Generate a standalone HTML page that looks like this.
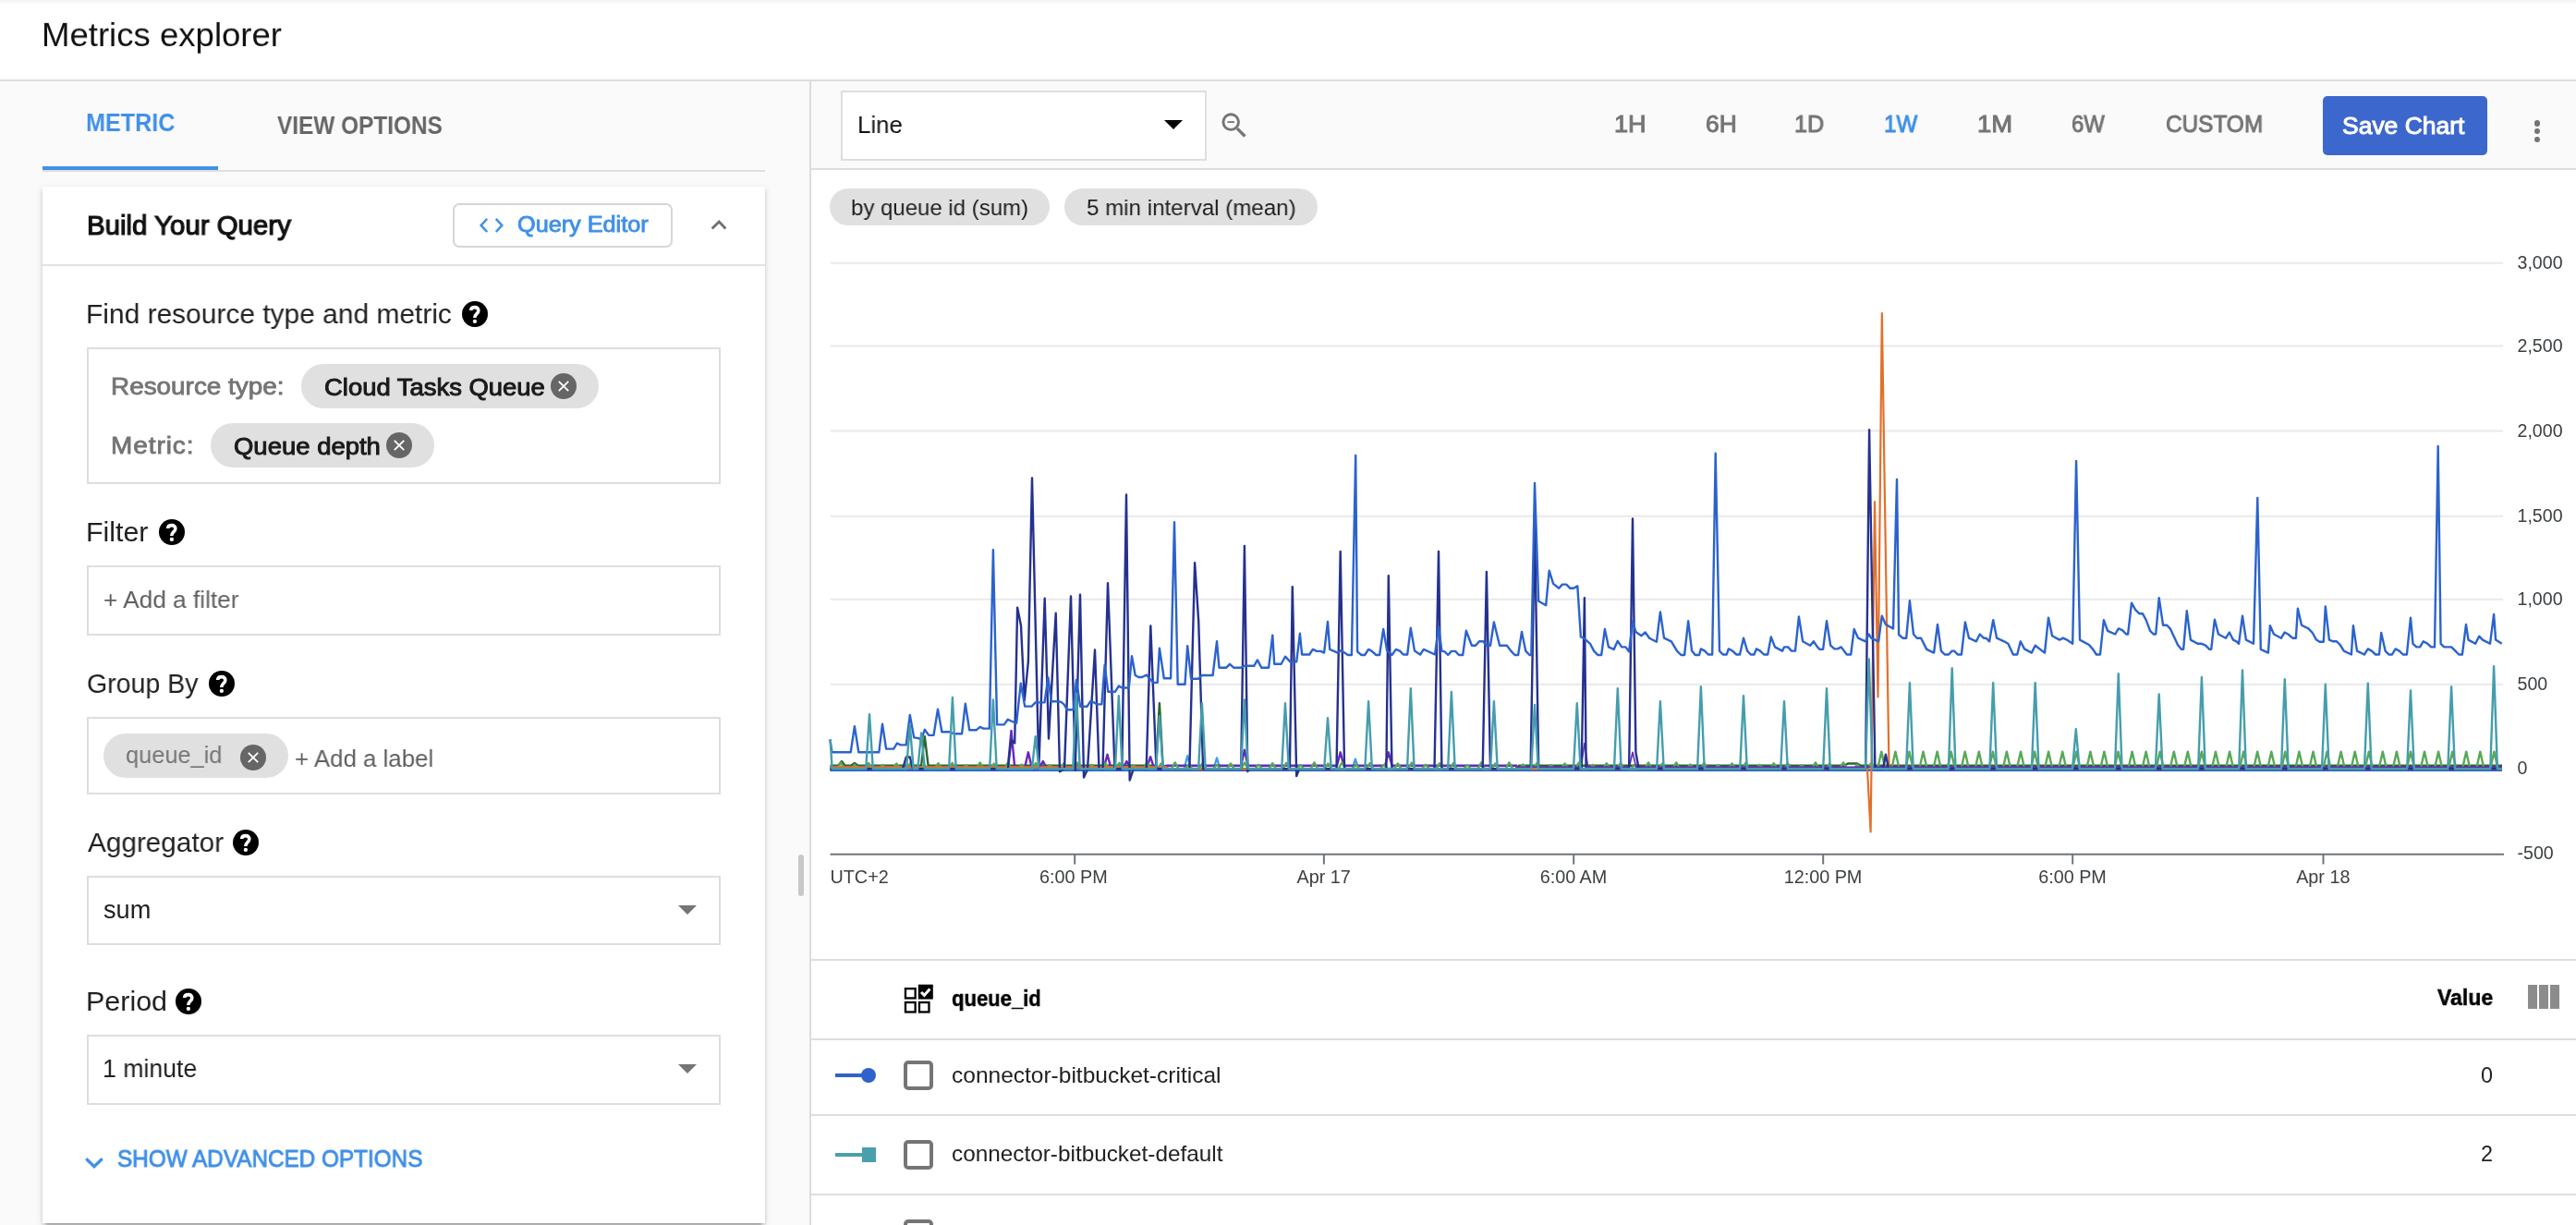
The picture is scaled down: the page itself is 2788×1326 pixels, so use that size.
<!DOCTYPE html>
<html><head><meta charset="utf-8"><title>Metrics explorer</title>
<style>
html,body{margin:0;padding:0;width:2788px;height:1326px;overflow:hidden}
body{background:#fff;font-family:'Liberation Sans',sans-serif}
#page{position:relative;width:2788px;height:1326px;overflow:hidden;background:#fff}
.a{position:absolute}
.t{position:absolute;white-space:pre;line-height:1;transform-origin:0 0;will-change:transform}
#chart{will-change:transform}
.box{position:absolute;box-sizing:border-box;border:2px solid #dedede;background:#fff}
.chip{position:absolute;background:#e0e0e0;border-radius:24px}
.hl{position:absolute;height:2px;background:#dedede}
</style></head><body><div id="page">
<div class="a" id="header" style="left:0;top:0;width:2788px;height:86px;background:#fff;border-bottom:2px solid #dcdcdc"></div>
<div class="a" style="left:0;top:0;width:2788px;height:5px;background:linear-gradient(#f2f2f2,#fff)"></div>
<div class="a" id="left" style="left:0;top:88px;width:876px;height:1238px;background:#fafafa;border-right:2px solid #dcdcdc"></div>
<div class="hl" style="left:46px;top:184px;width:782px"></div>
<div class="a" style="left:46px;top:180px;width:190px;height:4px;background:#4090e8"></div>
<div class="a" id="card" style="left:46px;top:202px;width:782px;height:1121.8px;background:#fff;box-shadow:0 4px 4px rgba(0,0,0,.14),0 6px 2px -4px rgba(0,0,0,.2),0 2px 8px rgba(0,0,0,.10)"></div>
<div class="hl" style="left:46px;top:286px;width:782px;background:#e2e2e2"></div>
<div class="a" style="left:490px;top:220px;width:238px;height:48px;box-sizing:border-box;border:2px solid #d4d6da;border-radius:7px;background:#fff"></div>
<svg class="a" style="left:518px;top:234px" width="28" height="20" viewBox="0 0 28 20"><path d="M9.200 2.900L2.600 9.900L9.200 17M18.800 2.900L25.300 9.900L18.800 17" fill="none" stroke="#4090e8" stroke-width="2.500"/></svg>
<svg class="a" style="left:768px;top:236px" width="20" height="15" viewBox="0 0 20 15"><path d="M2.600 11.500L10.200 4L17.400 11.500" fill="none" stroke="#707070" stroke-width="2.800"/></svg>
<div class="box" style="left:94px;top:376px;width:686px;height:148px"></div>
<div class="box" style="left:94px;top:612px;width:686px;height:76px"></div>
<div class="box" style="left:94px;top:776px;width:686px;height:84px"></div>
<div class="box" style="left:94px;top:948px;width:686px;height:75px"></div>
<div class="box" style="left:94px;top:1120px;width:686px;height:76px"></div>
<div class="chip" style="left:326px;top:394px;width:322px;height:48px"></div>
<div class="chip" style="left:228px;top:458px;width:242px;height:48px"></div>
<div class="chip" style="left:112px;top:794px;width:200px;height:48px"></div>
<svg class="a" style="left:596.0px;top:404.0px" width="28" height="28" viewBox="0 0 28 28"><circle cx="14" cy="14" r="14" fill="#666"/><path d="M8.800 8.800L19.200 19.200M19.200 8.800L8.800 19.200" stroke="#fff" stroke-width="1.800" fill="none"/></svg>
<svg class="a" style="left:418.0px;top:468.0px" width="28" height="28" viewBox="0 0 28 28"><circle cx="14" cy="14" r="14" fill="#666"/><path d="M8.800 8.800L19.200 19.200M19.200 8.800L8.800 19.200" stroke="#fff" stroke-width="1.800" fill="none"/></svg>
<svg class="a" style="left:260.0px;top:806.0px" width="28" height="28" viewBox="0 0 28 28"><circle cx="14" cy="14" r="14" fill="#666"/><path d="M8.800 8.800L19.200 19.200M19.200 8.800L8.800 19.200" stroke="#fff" stroke-width="1.800" fill="none"/></svg>
<svg class="a" style="left:500.0px;top:326.0px" width="28" height="28" viewBox="0 0 24 24"><circle cx="12" cy="12" r="12" fill="#000"/><path fill="none" stroke="#fff" stroke-width="3.050" d="M8.300 8.600C8.300 6.800 9.800 5.700 11.900 5.700C14 5.700 15.300 7 15.300 8.700C15.300 11.500 11.800 11.900 11.800 15.500"/><circle cx="11.900" cy="18.800" r="1.850" fill="#fff"/></svg>
<svg class="a" style="left:172.2px;top:562.0px" width="28" height="28" viewBox="0 0 24 24"><circle cx="12" cy="12" r="12" fill="#000"/><path fill="none" stroke="#fff" stroke-width="3.050" d="M8.300 8.600C8.300 6.800 9.800 5.700 11.900 5.700C14 5.700 15.300 7 15.300 8.700C15.300 11.500 11.800 11.900 11.800 15.500"/><circle cx="11.900" cy="18.800" r="1.850" fill="#fff"/></svg>
<svg class="a" style="left:226.2px;top:726.0px" width="28" height="28" viewBox="0 0 24 24"><circle cx="12" cy="12" r="12" fill="#000"/><path fill="none" stroke="#fff" stroke-width="3.050" d="M8.300 8.600C8.300 6.800 9.800 5.700 11.900 5.700C14 5.700 15.300 7 15.300 8.700C15.300 11.500 11.800 11.900 11.800 15.500"/><circle cx="11.900" cy="18.800" r="1.850" fill="#fff"/></svg>
<svg class="a" style="left:252.2px;top:898.0px" width="28" height="28" viewBox="0 0 24 24"><circle cx="12" cy="12" r="12" fill="#000"/><path fill="none" stroke="#fff" stroke-width="3.050" d="M8.300 8.600C8.300 6.800 9.800 5.700 11.900 5.700C14 5.700 15.300 7 15.300 8.700C15.300 11.500 11.800 11.900 11.800 15.500"/><circle cx="11.900" cy="18.800" r="1.850" fill="#fff"/></svg>
<svg class="a" style="left:190.1px;top:1070.0px" width="28" height="28" viewBox="0 0 24 24"><circle cx="12" cy="12" r="12" fill="#000"/><path fill="none" stroke="#fff" stroke-width="3.050" d="M8.300 8.600C8.300 6.800 9.800 5.700 11.900 5.700C14 5.700 15.300 7 15.300 8.700C15.300 11.500 11.800 11.900 11.800 15.500"/><circle cx="11.900" cy="18.800" r="1.850" fill="#fff"/></svg>
<svg class="a" style="left:734px;top:980px" width="20" height="10"><path d="M0 0H20L10 10z" fill="#757575"/></svg>
<svg class="a" style="left:734px;top:1152px" width="20" height="10"><path d="M0 0H20L10 10z" fill="#757575"/></svg>
<svg class="a" style="left:91px;top:1250px" width="23" height="17" viewBox="0 0 23 17"><path d="M2.200 4.300L10.960 12.800L19.700 4.300" fill="none" stroke="#4090e8" stroke-width="3.300"/></svg>
<div class="a" style="left:864px;top:925px;width:6px;height:45px;border-radius:3px;background:#c8c8c8"></div>
<div class="a" id="toolbar" style="left:878px;top:88px;width:1910px;height:94px;background:#fafafa;border-bottom:2px solid #dcdcdc"></div>
<div class="box" style="left:910px;top:98px;width:396px;height:76px"></div>
<svg class="a" style="left:1260px;top:130px" width="20" height="10"><path d="M0 0H20L10 10z" fill="#000"/></svg>
<svg class="a" style="left:1321px;top:121px" width="30" height="30" viewBox="0 0 30 30"><circle cx="11.200" cy="11.100" r="8.300" fill="none" stroke="#757575" stroke-width="2.900"/><path d="M18 18.100L26.400 26.500" stroke="#757575" stroke-width="3.300"/><path d="M7.400 11.100H15" stroke="#757575" stroke-width="1.800"/></svg>
<div class="a" style="left:2514px;top:104px;width:178px;height:64px;border-radius:5px;background:#3c67cd"></div>
<div class="a" style="left:2742.8px;top:130.4px;width:6.4px;height:6.4px;border-radius:50%;background:#757575"></div>
<div class="a" style="left:2742.8px;top:139.0px;width:6.4px;height:6.4px;border-radius:50%;background:#757575"></div>
<div class="a" style="left:2742.8px;top:147.6px;width:6.4px;height:6.4px;border-radius:50%;background:#757575"></div>
<div class="chip" style="left:898px;top:204px;width:238px;height:40px;border-radius:20px"></div>
<div class="chip" style="left:1152px;top:204px;width:274px;height:40px;border-radius:20px"></div>
<svg class="a" id="chart" style="left:0;top:0" width="2788" height="1000" viewBox="0 0 2788 1000" font-family="Liberation Sans, sans-serif">
<line x1="899" x2="2709" y1="284.8" y2="284.8" stroke="#e9e9e9" stroke-width="2"/>
<line x1="899" x2="2709" y1="374.5" y2="374.5" stroke="#e9e9e9" stroke-width="2"/>
<line x1="899" x2="2709" y1="466.6" y2="466.6" stroke="#e9e9e9" stroke-width="2"/>
<line x1="899" x2="2709" y1="558.7" y2="558.7" stroke="#e9e9e9" stroke-width="2"/>
<line x1="899" x2="2709" y1="648.7" y2="648.7" stroke="#e9e9e9" stroke-width="2"/>
<line x1="899" x2="2709" y1="740.7" y2="740.7" stroke="#e9e9e9" stroke-width="2"/>
<line x1="899" x2="2709" y1="832.0" y2="832.0" stroke="#e9e9e9" stroke-width="2"/>
<text x="2724.5" y="291.2" font-size="19.6" fill="#3c4043">3,000</text>
<text x="2724.5" y="380.9" font-size="19.6" fill="#3c4043">2,500</text>
<text x="2724.5" y="473.0" font-size="19.6" fill="#3c4043">2,000</text>
<text x="2724.5" y="565.1" font-size="19.6" fill="#3c4043">1,500</text>
<text x="2724.5" y="655.1" font-size="19.6" fill="#3c4043">1,000</text>
<text x="2724.5" y="747.1" font-size="19.6" fill="#3c4043">500</text>
<text x="2724.5" y="838.4" font-size="19.6" fill="#3c4043">0</text>
<text x="2724.5" y="929.6" font-size="19.6" fill="#3c4043">-500</text>
<polyline points="898.4,833.0 1281.5,833.0 1285.2,818.0 1288.9,833.0 1313.3,833.0 1317.0,820.4 1320.7,833.0 1463.2,833.0 1466.9,821.6 1470.6,833.0 2708.0,833.0" fill="none" stroke="#3d9be9" stroke-width="2.2" stroke-linejoin="round" />
<polyline points="898.4,833.9 2708.0,833.9" fill="none" stroke="#2b63cd" stroke-width="2.4" stroke-linejoin="round" />
<polyline points="898.4,828.7 907.2,828.7 910.9,824.1 914.6,828.7 921.2,828.7 924.9,826.0 928.6,828.7 997.1,828.7 1000.8,797.1 1004.6,828.7 1251.2,828.7 1254.9,761.2 1258.6,828.7 1262.0,832.3 1640.0,832.3 1644.0,828.7 1996.0,828.7 2000.0,826.5 2010.0,826.5 2014.0,828.7 2708.0,828.7" fill="none" stroke="#2a662a" stroke-width="2.4" stroke-linejoin="round" />
<polyline points="898.4,830.6 1090.8,830.6 1094.5,791.0 1098.2,830.6 1109.2,830.6 1112.9,814.3 1116.6,830.6 1125.1,830.6 1128.8,824.0 1132.5,830.6 1194.8,830.6 1198.5,816.7 1202.2,830.6 1215.7,830.6 1219.4,824.0 1223.1,830.6 1241.4,830.6 1245.1,819.2 1248.8,830.6 1258.0,830.6 1262.0,828.8 1343.2,828.8 1346.9,811.8 1350.6,828.8 1447.0,828.8 1450.7,814.3 1454.4,828.8 1499.1,828.8 1502.8,814.3 1506.5,828.8 1642.0,828.8" fill="none" stroke="#6727bd" stroke-width="2.4" stroke-linejoin="round" />
<polyline points="898.4,832.0 906.3,832.0 910.0,825.4 913.7,832.0 921.4,832.0 925.1,827.6 928.8,832.0 936.4,832.0 940.1,826.0 943.8,832.0 951.5,832.0 955.2,828.0 958.9,832.0 966.6,832.0 970.3,826.4 974.0,832.0 981.7,832.0 985.4,825.6 989.1,832.0 996.7,832.0 1000.4,827.8 1004.1,832.0 1011.8,832.0 1015.5,826.2 1019.2,832.0 1026.9,832.0 1030.6,825.8 1034.3,832.0 1041.9,832.0 1045.6,828.2 1049.3,832.0 1057.0,832.0 1060.7,825.4 1064.4,832.0 1072.1,832.0 1075.8,826.6 1079.5,832.0 1087.1,832.0 1090.8,825.4 1094.5,832.0 1102.2,832.0 1105.9,827.6 1109.6,832.0 1117.3,832.0 1121.0,826.0 1124.7,832.0 1132.3,832.0 1136.0,828.0 1139.8,832.0 1147.4,832.0 1151.1,826.4 1154.8,832.0 1162.5,832.0 1166.2,825.6 1169.9,832.0 1177.6,832.0 1181.3,827.8 1185.0,832.0 1192.6,832.0 1196.3,826.2 1200.0,832.0 1207.7,832.0 1211.4,825.8 1215.1,832.0 1222.8,832.0 1226.5,828.2 1230.2,832.0 1237.8,832.0 1241.5,825.4 1245.2,832.0 1252.9,832.0 1256.6,826.6 1260.3,832.0 1268.0,832.0 1271.7,825.4 1275.4,832.0 1283.0,832.0 1286.7,827.6 1290.4,832.0 1298.1,832.0 1301.8,826.0 1305.5,832.0 1313.2,832.0 1316.9,828.0 1320.6,832.0 1328.3,832.0 1332.0,826.4 1335.7,832.0 1343.3,832.0 1347.0,825.6 1350.7,832.0 1358.4,832.0 1362.1,827.8 1365.8,832.0 1373.5,832.0 1377.2,826.2 1380.9,832.0 1388.5,832.0 1392.2,825.8 1395.9,832.0 1403.6,832.0 1407.3,828.2 1411.0,832.0 1418.7,832.0 1422.4,825.4 1426.1,832.0 1433.7,832.0 1437.4,826.6 1441.1,832.0 1448.8,832.0 1452.5,825.4 1456.2,832.0 1463.9,832.0 1467.6,827.6 1471.3,832.0 1479.0,832.0 1482.7,826.0 1486.4,832.0 1494.0,832.0 1497.7,828.0 1501.4,832.0 1509.1,832.0 1512.8,826.4 1516.5,832.0 1524.2,832.0 1527.9,825.6 1531.6,832.0 1539.2,832.0 1542.9,827.8 1546.6,832.0 1554.3,832.0 1558.0,826.2 1561.7,832.0 1569.4,832.0 1573.1,825.8 1576.8,832.0 1584.4,832.0 1588.1,828.2 1591.8,832.0 1599.5,832.0 1603.2,825.4 1606.9,832.0 1614.6,832.0 1618.3,826.6 1622.0,832.0 1629.7,832.0 1633.4,825.4 1637.1,832.0 1644.7,832.0 1648.4,827.6 1652.1,832.0 1659.8,832.0 1663.5,826.0 1667.2,832.0 1674.9,832.0 1678.6,828.0 1682.3,832.0 1689.9,832.0 1693.6,826.4 1697.3,832.0 1705.0,832.0 1708.7,825.6 1712.4,832.0 1720.1,832.0 1723.8,827.8 1727.5,832.0 1735.1,832.0 1738.8,826.2 1742.5,832.0 1750.2,832.0 1753.9,825.8 1757.6,832.0 1765.3,832.0 1769.0,828.2 1772.7,832.0 1780.4,832.0 1784.1,825.4 1787.8,832.0 1795.4,832.0 1799.1,826.6 1802.8,832.0 1810.5,832.0 1814.2,825.4 1817.9,832.0 1825.6,832.0 1829.3,827.6 1833.0,832.0 1840.6,832.0 1844.3,826.0 1848.0,832.0 1855.7,832.0 1859.4,828.0 1863.1,832.0 1870.8,832.0 1874.5,826.4 1878.2,832.0 1885.8,832.0 1889.5,825.6 1893.2,832.0 1900.9,832.0 1904.6,827.8 1908.3,832.0 1916.0,832.0 1919.7,826.2 1923.4,832.0 1931.1,832.0 1934.8,825.8 1938.5,832.0 1946.1,832.0 1949.8,828.2 1953.5,832.0 1961.2,832.0 1964.9,825.4 1968.6,832.0 1976.3,832.0 1980.0,826.6 1983.7,832.0 1991.3,832.0 1995.0,825.4 1998.7,832.0 2006.4,832.0 2010.1,827.6 2013.8,832.0 2021.5,832.0 2025.2,826.0 2028.9,832.0 2031.0,832.0 2032.2,832.0 2036.3,813.6 2040.4,832.0 2047.3,832.0 2051.4,813.6 2055.5,832.0 2062.3,832.0 2066.4,813.6 2070.5,832.0 2077.4,832.0 2081.5,813.6 2085.6,832.0 2092.5,832.0 2096.6,813.6 2100.7,832.0 2107.6,832.0 2111.7,813.6 2115.8,832.0 2122.6,832.0 2126.7,813.6 2130.8,832.0 2137.7,832.0 2141.8,813.6 2145.9,832.0 2152.8,832.0 2156.9,813.6 2161.0,832.0 2167.8,832.0 2171.9,813.6 2176.0,832.0 2182.9,832.0 2187.0,813.6 2191.1,832.0 2198.0,832.0 2202.1,813.6 2206.2,832.0 2213.0,832.0 2217.1,813.6 2221.2,832.0 2228.1,832.0 2232.2,813.6 2236.3,832.0 2243.2,832.0 2247.3,813.6 2251.4,832.0 2258.3,832.0 2262.4,813.6 2266.5,832.0 2273.3,832.0 2277.4,813.6 2281.5,832.0 2288.4,832.0 2292.5,813.6 2296.6,832.0 2303.5,832.0 2307.6,813.6 2311.7,832.0 2318.5,832.0 2322.6,813.6 2326.7,832.0 2333.6,832.0 2337.7,813.6 2341.8,832.0 2348.7,832.0 2352.8,813.6 2356.9,832.0 2363.7,832.0 2367.8,813.6 2371.9,832.0 2378.8,832.0 2382.9,813.6 2387.0,832.0 2393.9,832.0 2398.0,813.6 2402.1,832.0 2409.0,832.0 2413.1,813.6 2417.2,832.0 2424.0,832.0 2428.1,813.6 2432.2,832.0 2439.1,832.0 2443.2,813.6 2447.3,832.0 2454.2,832.0 2458.3,813.6 2462.4,832.0 2469.2,832.0 2473.3,813.6 2477.4,832.0 2484.3,832.0 2488.4,813.6 2492.5,832.0 2499.4,832.0 2503.5,813.6 2507.6,832.0 2514.4,832.0 2518.5,813.6 2522.6,832.0 2529.5,832.0 2533.6,813.6 2537.7,832.0 2544.6,832.0 2548.7,813.6 2552.8,832.0 2559.7,832.0 2563.8,813.6 2567.9,832.0 2574.7,832.0 2578.8,813.6 2582.9,832.0 2589.8,832.0 2593.9,813.6 2598.0,832.0 2604.9,832.0 2609.0,813.6 2613.1,832.0 2619.9,832.0 2624.0,813.6 2628.1,832.0 2635.0,832.0 2639.1,813.6 2643.2,832.0 2650.1,832.0 2654.2,813.6 2658.3,832.0 2665.1,832.0 2669.2,813.6 2673.3,832.0 2680.2,832.0 2684.3,813.6 2688.4,832.0 2695.3,832.0 2699.4,813.6 2703.5,832.0 2708.0,832.0" fill="none" stroke="#58a858" stroke-width="2.4" stroke-linejoin="round" />
<polyline points="1642.0,830.4 1711.2,830.4 1714.9,804.5 1718.6,830.4 1763.3,830.4 1767.0,814.3 1770.7,830.4 2708.0,830.4" fill="none" stroke="#6727bd" stroke-width="1.6" stroke-linejoin="round" />
<polyline points="898.4,830.4 1262.0,830.4 1266.0,832.3 2021.0,832.3 2024.6,900.5 2029.0,543.0 2032.5,754.4 2036.8,339.0 2044.5,832.3 2708.0,832.3" fill="none" stroke="#e0712c" stroke-width="2.2" stroke-linejoin="round" />
<polyline points="898.4,832.3 977.0,832.3 980.7,819.5 984.8,819.5 988.0,832.3 1090.8,832.3 1094.5,800.8 1098.2,804.5 1101.1,657.6 1105.0,677.2 1108.8,758.0 1112.9,716.0 1117.0,517.4 1124.3,832.0 1130.7,647.8 1135.0,799.6 1142.7,663.7 1147.0,835.3 1152.0,832.3 1159.0,645.4 1163.7,833.8 1169.0,643.6 1173.0,841.5 1177.0,833.0 1185.0,703.5 1189.5,832.3 1193.5,832.3 1199.0,631.3 1206.5,832.3 1214.3,832.3 1219.0,535.4 1222.7,844.6 1226.7,832.3 1240.7,832.3 1245.3,677.4 1251.5,832.3 1287.4,832.3 1293.1,609.1 1297.2,672.3 1302.1,832.3 1343.2,832.3 1346.9,591.0 1350.3,835.1 1352.3,832.3 1395.9,832.3 1398.8,635.1 1403.2,840.0 1406.2,832.3 1446.5,832.3 1450.7,596.9 1455.1,832.3 1500.4,832.3 1502.8,623.3 1506.5,832.3 1552.5,832.3 1557.0,596.9 1560.4,832.3 1604.7,832.3 1608.9,618.9 1613.0,832.3 1656.6,832.3 1661.0,565.8 1665.2,832.3 1711.7,832.3 1714.9,647.3 1716.6,832.3 1763.1,832.3 1767.0,561.4 1770.4,814.3 1773.6,832.3 2019.1,832.3 2023.1,465.1 2029.4,832.3 2038.0,832.3 2040.9,816.7 2044.1,832.3 2708.0,832.3" fill="none" stroke="#25318f" stroke-width="2.4" stroke-linejoin="round" />
<polyline points="898.4,800.8 900.4,814.3 920.7,814.3 924.9,786.1 929.3,814.3 951.3,814.3 955.0,783.7 959.1,810.6 967.2,810.6 970.9,804.5 974.6,806.4 980.7,806.4 984.8,773.9 989.2,798.4 994.1,799.1 997.1,800.8 1000.8,789.8 1005.2,795.9 1010.5,795.9 1015.0,767.8 1019.4,792.2 1028.4,792.2 1032.1,794.2 1041.1,794.2 1044.8,761.6 1049.2,790.3 1056.6,790.3 1060.7,786.9 1064.4,788.6 1070.8,788.6 1074.9,595.2 1079.1,784.4 1086.7,784.4 1090.8,778.8 1094.5,780.5 1100.1,782.9 1104.8,739.6 1109.2,764.6 1116.5,764.6 1120.7,760.4 1130.5,760.4 1134.4,733.5 1137.8,759.2 1144.7,759.2 1148.4,759.9 1151.5,762.4 1155.0,768.3 1161.8,768.3 1165.0,735.9 1169.2,764.8 1176.5,764.8 1180.2,759.2 1183.9,760.4 1187.5,762.4 1192.4,762.4 1195.6,720.0 1199.3,748.7 1207.1,748.7 1210.8,742.6 1214.5,744.5 1221.8,744.5 1225.0,710.2 1228.7,731.0 1232.3,733.0 1236.0,733.0 1240.9,730.6 1243.4,733.5 1248.3,738.9 1252.7,738.9 1254.9,701.7 1259.8,734.2 1267.1,734.2 1271.0,565.3 1274.7,740.8 1282.5,740.8 1285.2,699.2 1289.1,734.7 1297.2,734.7 1300.9,731.0 1312.6,731.0 1317.0,694.3 1319.5,722.7 1327.3,722.7 1331.0,718.8 1335.2,722.7 1343.2,722.7 1346.7,720.8 1357.2,720.8 1360.9,714.4 1365.3,722.7 1373.1,722.7 1377.3,687.7 1379.2,718.8 1386.6,718.8 1391.0,710.7 1396.4,716.4 1403.2,716.4 1406.9,685.8 1409.1,708.5 1417.2,708.5 1420.8,702.9 1425.2,704.9 1429.4,704.9 1433.1,706.6 1437.0,673.0 1439.2,702.9 1447.8,706.6 1451.4,704.1 1458.8,709.0 1462.9,709.0 1467.2,492.9 1469.1,705.3 1473.5,709.0 1477.1,709.0 1481.1,702.9 1484.5,704.6 1489.4,709.0 1493.1,709.0 1497.2,680.9 1501.1,704.1 1506.5,709.0 1510.9,702.9 1515.1,704.6 1518.8,708.5 1523.2,708.5 1526.8,679.6 1531.0,704.6 1537.1,708.5 1540.8,702.9 1553.0,708.5 1557.0,678.4 1560.4,704.6 1563.6,705.3 1567.2,709.0 1570.9,704.9 1575.1,704.9 1579.0,709.0 1583.2,709.0 1586.8,682.8 1592.9,698.7 1597.1,698.7 1601.0,694.3 1605.2,694.3 1608.9,698.7 1613.0,698.7 1616.9,673.5 1623.1,698.7 1630.9,698.7 1635.3,704.6 1639.5,709.0 1643.1,709.0 1647.0,684.0 1651.2,704.6 1655.4,709.0 1657.3,709.0 1661.0,523.0 1665.2,650.8 1673.2,655.2 1676.7,617.7 1681.1,631.9 1687.2,636.8 1690.9,632.6 1695.3,632.6 1699.4,636.8 1703.1,636.8 1707.3,634.4 1710.9,689.4 1714.1,690.7 1721.0,696.8 1725.1,704.6 1729.3,709.0 1733.2,709.0 1736.9,680.9 1741.0,700.4 1746.7,702.9 1750.8,693.8 1755.2,700.4 1759.4,700.4 1763.1,705.3 1767.0,672.3 1770.4,684.0 1776.5,688.2 1780.7,684.5 1785.1,690.7 1792.9,694.8 1796.9,662.5 1801.0,690.7 1808.9,694.3 1815.0,704.6 1819.4,709.0 1823.1,709.0 1827.2,672.3 1831.1,704.6 1834.8,709.0 1839.0,709.0 1840.9,702.4 1845.1,704.6 1848.8,708.5 1853.2,708.5 1856.7,490.8 1861.0,704.6 1864.7,708.5 1868.8,708.5 1870.8,702.4 1874.5,704.1 1879.4,708.5 1883.0,708.5 1887.0,690.7 1891.1,704.6 1894.8,708.5 1898.5,708.5 1900.9,702.4 1905.1,704.6 1909.0,708.5 1913.2,708.5 1916.8,689.4 1921.0,700.4 1929.1,704.6 1931.0,700.4 1935.2,700.4 1938.9,704.6 1943.0,704.6 1946.9,667.4 1951.1,694.3 1959.2,698.7 1962.8,694.3 1967.0,700.4 1969.5,702.9 1973.1,702.9 1977.0,672.3 1981.2,698.7 1985.4,702.4 1989.0,702.4 1992.7,700.4 1998.8,708.5 2003.2,708.5 2006.7,680.9 2011.1,690.7 2019.1,694.3 2022.8,686.5 2025.3,690.7 2033.1,694.3 2036.8,666.7 2040.9,676.0 2049.0,680.4 2053.0,518.9 2055.1,687.0 2059.3,690.7 2063.2,690.7 2066.9,650.3 2071.0,686.5 2074.7,690.7 2079.1,690.7 2085.2,702.9 2093.1,706.6 2097.0,676.0 2100.9,704.6 2104.8,708.5 2109.0,708.5 2112.7,704.6 2115.1,704.6 2118.8,708.5 2122.9,708.5 2126.9,673.5 2131.0,690.7 2138.9,694.3 2142.8,686.5 2146.9,690.7 2149.4,690.7 2153.1,694.3 2157.2,671.1 2161.1,690.7 2169.0,694.3 2173.4,696.8 2178.8,708.5 2183.2,708.5 2186.8,694.3 2191.0,702.4 2198.8,706.6 2202.7,698.7 2213.0,706.6 2217.0,668.6 2221.1,688.2 2229.0,692.6 2232.9,690.7 2237.0,692.6 2243.2,696.8 2247.1,498.9 2251.0,692.6 2261.0,698.0 2265.2,702.9 2268.9,708.5 2273.0,708.5 2276.9,671.1 2281.1,682.8 2289.2,686.5 2292.8,680.4 2297.0,682.1 2301.2,686.5 2303.1,686.5 2307.0,652.7 2311.2,660.1 2315.4,664.2 2319.0,664.2 2322.7,671.1 2327.1,682.8 2330.8,686.5 2333.2,686.5 2336.7,647.3 2341.1,676.7 2345.2,676.7 2349.1,680.9 2357.0,698.0 2361.1,702.9 2363.1,702.9 2366.8,661.3 2370.9,692.6 2378.5,696.8 2382.9,696.8 2387.1,698.7 2391.3,702.9 2393.2,702.9 2396.9,670.6 2401.0,686.5 2409.1,690.7 2412.8,684.5 2417.0,692.6 2420.6,694.3 2423.1,696.8 2427.0,666.7 2430.9,692.6 2439.0,696.8 2443.3,538.9 2446.8,702.9 2454.9,706.6 2456.9,677.2 2461.0,686.5 2468.9,690.7 2472.7,684.5 2476.4,686.5 2481.3,690.7 2484.9,690.7 2486.9,658.8 2491.0,676.7 2498.4,680.4 2502.8,685.0 2507.0,692.6 2510.6,694.8 2514.8,694.8 2516.8,656.4 2520.9,692.6 2525.3,694.3 2529.0,694.3 2532.7,698.0 2536.8,704.6 2544.9,708.5 2546.9,677.2 2551.0,704.6 2558.9,708.5 2562.8,702.4 2566.9,704.6 2571.1,708.5 2575.0,708.5 2577.2,685.0 2581.6,704.6 2585.3,708.5 2589.0,708.5 2592.6,702.4 2596.8,704.6 2600.7,708.5 2604.9,708.5 2609.0,668.6 2611.5,696.8 2615.4,700.4 2619.1,700.4 2622.7,694.3 2626.9,696.3 2631.3,700.4 2635.0,700.4 2638.7,483.0 2641.6,696.8 2645.3,700.4 2653.1,700.4 2657.0,704.1 2661.2,708.5 2664.9,708.5 2669.0,676.0 2671.5,692.6 2679.1,696.8 2683.2,688.7 2686.9,692.6 2695.0,696.8 2699.1,665.0 2701.1,692.6 2707.7,696.8" fill="none" stroke="#2b63cd" stroke-width="2.4" stroke-linejoin="round" />
<polyline points="898.6,800.0 900.6,832.3 937.2,832.3 941.0,773.2 944.8,832.3 981.0,832.3 984.8,784.9 988.6,832.3 993.3,832.3 997.1,793.5 1000.9,832.3 1027.1,832.3 1030.9,755.0 1034.7,832.3 1071.1,832.3 1074.9,757.5 1078.7,832.3 1116.9,832.3 1120.7,797.1 1124.5,832.3 1161.2,832.3 1165.0,750.6 1168.8,832.3 1207.0,832.3 1210.8,753.1 1214.6,832.3 1251.1,832.3 1254.9,775.1 1258.7,832.3 1297.1,832.3 1300.9,761.2 1304.7,832.3 1343.1,832.3 1346.9,757.5 1350.7,832.3 1387.2,832.3 1391.0,761.2 1394.8,832.3 1433.2,832.3 1437.0,777.1 1440.8,832.3 1477.3,832.3 1481.1,759.2 1484.9,832.3 1523.0,832.3 1526.8,745.2 1530.6,832.3 1567.1,832.3 1570.9,748.9 1574.7,832.3 1613.1,832.3 1616.9,759.2 1620.7,832.3 1657.2,832.3 1661.0,762.9 1664.8,832.3 1703.0,832.3 1706.8,761.2 1710.6,832.3 1747.0,832.3 1750.8,745.2 1754.6,832.3 1793.1,832.3 1796.9,759.2 1800.7,832.3 1837.1,832.3 1840.9,743.3 1844.7,832.3 1883.2,832.3 1887.0,753.1 1890.8,832.3 1927.2,832.3 1931.0,759.2 1934.8,832.3 1973.2,832.3 1977.0,745.2 1980.8,832.3 2019.0,832.3 2022.8,713.4 2026.6,832.3 2063.1,832.3 2066.9,739.1 2070.7,832.3 2108.9,832.3 2112.7,723.2 2116.5,832.3 2153.4,832.3 2157.2,739.1 2161.0,832.3 2198.9,832.3 2202.7,739.1 2206.5,832.3 2243.0,832.3 2246.8,789.3 2250.6,832.3 2289.0,832.3 2292.8,729.1 2296.6,832.3 2332.9,832.3 2336.7,751.4 2340.5,832.3 2379.1,832.3 2382.9,733.0 2386.7,832.3 2423.2,832.3 2427.0,725.4 2430.8,832.3 2469.0,832.3 2472.8,735.2 2476.6,832.3 2513.0,832.3 2516.8,740.8 2520.6,832.3 2559.0,832.3 2562.8,739.6 2566.6,832.3 2605.2,832.3 2609.0,747.4 2612.8,832.3 2649.3,832.3 2653.1,743.3 2656.9,832.3 2695.3,832.3 2699.1,721.3 2702.9,832.3 2708.0,832.3" fill="none" stroke="#459dad" stroke-width="2.4" stroke-linejoin="round" />
<line x1="898.500" x2="2710" y1="924.8" y2="924.8" stroke="#70757a" stroke-width="2"/>
<line x1="1163.2" x2="1163.2" y1="925" y2="935.5" stroke="#70757a" stroke-width="2"/>
<text x="1161.8" y="956" font-size="19.8" fill="#3c4043" text-anchor="middle">6:00 PM</text>
<line x1="1432.9" x2="1432.9" y1="925" y2="935.5" stroke="#70757a" stroke-width="2"/>
<text x="1432.7" y="956" font-size="19.8" fill="#3c4043" text-anchor="middle">Apr 17</text>
<line x1="1703.2" x2="1703.2" y1="925" y2="935.5" stroke="#70757a" stroke-width="2"/>
<text x="1703.0" y="956" font-size="19.8" fill="#3c4043" text-anchor="middle">6:00 AM</text>
<line x1="1973.2" x2="1973.2" y1="925" y2="935.5" stroke="#70757a" stroke-width="2"/>
<text x="1973.0" y="956" font-size="19.8" fill="#3c4043" text-anchor="middle">12:00 PM</text>
<line x1="2243.2" x2="2243.2" y1="925" y2="935.5" stroke="#70757a" stroke-width="2"/>
<text x="2243.0" y="956" font-size="19.8" fill="#3c4043" text-anchor="middle">6:00 PM</text>
<line x1="2514.5" x2="2514.5" y1="925" y2="935.5" stroke="#70757a" stroke-width="2"/>
<text x="2514.3" y="956" font-size="19.8" fill="#3c4043" text-anchor="middle">Apr 18</text>
<text x="898.500" y="956" font-size="19.8" fill="#3c4043">UTC+2</text>
</svg>
<div class="hl" style="left:878px;top:1038px;width:1910px"></div>
<div class="hl" style="left:878px;top:1124px;width:1910px"></div>
<div class="hl" style="left:878px;top:1206px;width:1910px"></div>
<div class="hl" style="left:878px;top:1292px;width:1910px"></div>
<svg class="a" style="left:978.200px;top:1065.200px" width="34" height="34" viewBox="0 0 34 34"><rect x="1.950" y="5.150" width="10.700" height="10.300" fill="none" stroke="#000" stroke-width="2.300"/><rect x="1.950" y="20.050" width="10.700" height="10.400" fill="none" stroke="#000" stroke-width="2.300"/><rect x="16.950" y="20.050" width="10.500" height="10.400" fill="none" stroke="#000" stroke-width="2.300"/><rect x="15.800" y="0.700" width="16" height="15.900" fill="#000"/><path d="M19 9L22.400 12.300L28.400 5.600" stroke="#fff" stroke-width="3" fill="none"/></svg>
<div class="a" style="left:2736px;top:1066px;width:10px;height:26px;background:#8c8c8c"></div>
<div class="a" style="left:2748px;top:1066px;width:10px;height:26px;background:#8c8c8c"></div>
<div class="a" style="left:2760px;top:1066px;width:10px;height:26px;background:#8c8c8c"></div>
<div class="a" style="left:904px;top:1162px;width:30px;height:4px;background:#2f62cc"></div>
<div class="a" style="left:931.800px;top:1155.7px;width:16.4px;height:16.4px;border-radius:50%;background:#2f62cc"></div>
<div class="a" style="left:904px;top:1248px;width:30px;height:4px;background:#4a9fad"></div>
<div class="a" style="left:932.500px;top:1242px;width:15.5px;height:15.5px;background:#4a9fad"></div>
<div class="a" style="left:978px;top:1148px;width:32px;height:32px;box-sizing:border-box;border:4px solid #757575;border-radius:5px;background:#fff"></div>
<div class="a" style="left:978px;top:1234px;width:32px;height:32px;box-sizing:border-box;border:4px solid #757575;border-radius:5px;background:#fff"></div>
<div class="a" style="left:978px;top:1320px;width:32px;height:32px;box-sizing:border-box;border:4px solid #757575;border-radius:5px;background:#fff"></div>
<span class="t" style="left:44.77px;top:21.07px;font-size:36px;font-weight:400;color:#111;letter-spacing:0.000px;transform:scale(1.0155,0.965)">Metrics explorer</span>
<span class="t" style="left:92.67px;top:119.75px;font-size:27px;font-weight:700;color:#4090e8;letter-spacing:0.000px;transform:scale(0.9314,1.000)">METRIC</span>
<span class="t" style="left:299.60px;top:122.60px;font-size:27px;font-weight:700;color:#666;letter-spacing:0.000px;transform:scale(0.9030,1.000)">VIEW OPTIONS</span>
<span class="t" style="left:93.94px;top:228.50px;font-size:30px;font-weight:400;color:#111;letter-spacing:0.000px;transform:scale(0.9804,1.000);-webkit-text-stroke:1.2px #111">Build Your Query</span>
<span class="t" style="left:559.62px;top:230.76px;font-size:24.4px;font-weight:400;color:#4090e8;letter-spacing:0.000px;transform:scale(1.0347,1.000);-webkit-text-stroke:0.9px #4090e8">Query Editor</span>
<span class="t" style="left:93.10px;top:324.60px;font-size:30px;font-weight:400;color:#212121;letter-spacing:0.000px;transform:scale(0.9976,1.000)">Find resource type and metric</span>
<span class="t" style="left:119.51px;top:404.86px;font-size:26.4px;font-weight:400;color:#757575;letter-spacing:0.000px;transform:scale(1.0565,1.000);-webkit-text-stroke:0.85px #757575">Resource type:</span>
<span class="t" style="left:350.66px;top:405.86px;font-size:26.4px;font-weight:400;color:#1a1a1a;letter-spacing:0.000px;transform:scale(1.0392,1.000);-webkit-text-stroke:1.0px #1a1a1a">Cloud Tasks Queue</span>
<span class="t" style="left:119.50px;top:469.26px;font-size:26.4px;font-weight:400;color:#757575;letter-spacing:0.884px;transform:scale(1.0600,1.000);-webkit-text-stroke:0.85px #757575">Metric:</span>
<span class="t" style="left:252.76px;top:470.06px;font-size:26.4px;font-weight:400;color:#1a1a1a;letter-spacing:0.000px;transform:scale(1.0411,1.000);-webkit-text-stroke:1.0px #1a1a1a">Queue depth</span>
<span class="t" style="left:92.98px;top:560.50px;font-size:30px;font-weight:400;color:#212121;letter-spacing:0.000px;transform:scale(1.0112,1.000)">Filter</span>
<span class="t" style="left:111.90px;top:636.14px;font-size:26.3px;font-weight:400;color:#5f5f5f;letter-spacing:0.000px;transform:scale(0.9965,1.000)">+ Add a filter</span>
<span class="t" style="left:94.05px;top:724.80px;font-size:30px;font-weight:400;color:#212121;letter-spacing:0.000px;transform:scale(0.9505,1.000)">Group By</span>
<span class="t" style="left:136.02px;top:804.30px;font-size:26px;font-weight:400;color:#757575;letter-spacing:0.000px;transform:scale(0.9757,1.000)">queue_id</span>
<span class="t" style="left:319.42px;top:808.14px;font-size:26.3px;font-weight:400;color:#5f5f5f;letter-spacing:0.000px;transform:scale(0.9829,1.000)">+ Add a label</span>
<span class="t" style="left:95.00px;top:896.80px;font-size:30px;font-weight:400;color:#212121;letter-spacing:0.000px;transform:scale(0.9903,1.000)">Aggregator</span>
<span class="t" style="left:112.20px;top:972.15px;font-size:27px;font-weight:400;color:#212121;letter-spacing:0.000px;transform:scale(1.0057,1.000)">sum</span>
<span class="t" style="left:92.97px;top:1068.60px;font-size:30px;font-weight:400;color:#212121;letter-spacing:0.000px;transform:scale(1.0152,1.000)">Period</span>
<span class="t" style="left:111.02px;top:1144.45px;font-size:27px;font-weight:400;color:#212121;letter-spacing:0.000px;transform:scale(0.9877,1.000)">1 minute</span>
<span class="t" style="left:126.53px;top:1241.06px;font-size:26.4px;font-weight:400;color:#4090e8;letter-spacing:0.000px;transform:scale(0.9210,1.000);-webkit-text-stroke:0.9px #4090e8">SHOW ADVANCED OPTIONS</span>
<span class="t" style="left:928.04px;top:121.86px;font-size:26.4px;font-weight:400;color:#111;letter-spacing:0.000px;transform:scale(0.9784,1.000)">Line</span>
<span class="t" style="left:1747.34px;top:121.26px;font-size:26.4px;font-weight:400;color:#757575;letter-spacing:0.000px;transform:scale(1.0277,1.000);-webkit-text-stroke:1.0px #757575">1H</span>
<span class="t" style="left:1845.81px;top:121.26px;font-size:26.4px;font-weight:400;color:#757575;letter-spacing:0.000px;transform:scale(0.9910,1.000);-webkit-text-stroke:1.0px #757575">6H</span>
<span class="t" style="left:1941.60px;top:121.26px;font-size:26.4px;font-weight:400;color:#757575;letter-spacing:0.000px;transform:scale(0.9518,1.000);-webkit-text-stroke:1.0px #757575">1D</span>
<span class="t" style="left:2038.77px;top:121.26px;font-size:26.4px;font-weight:400;color:#4090e8;letter-spacing:0.000px;transform:scale(0.9130,1.000);-webkit-text-stroke:1.0px #4090e8">1W</span>
<span class="t" style="left:2139.82px;top:121.26px;font-size:26.4px;font-weight:400;color:#757575;letter-spacing:0.000px;transform:scale(1.0405,1.000);-webkit-text-stroke:1.0px #757575">1M</span>
<span class="t" style="left:2242.10px;top:121.26px;font-size:26.4px;font-weight:400;color:#757575;letter-spacing:0.000px;transform:scale(0.9023,1.000);-webkit-text-stroke:1.0px #757575">6W</span>
<span class="t" style="left:2343.88px;top:121.26px;font-size:26.4px;font-weight:400;color:#757575;letter-spacing:0.000px;transform:scale(0.9234,1.000);-webkit-text-stroke:1.0px #757575">CUSTOM</span>
<span class="t" style="left:2534.60px;top:123.26px;font-size:26.4px;font-weight:400;color:#fff;letter-spacing:0.000px;transform:scale(1.0031,1.000);-webkit-text-stroke:1.0px #fff">Save Chart</span>
<span class="t" style="left:921.42px;top:212.68px;font-size:24.5px;font-weight:400;color:#212121;letter-spacing:0.000px;transform:scale(0.9792,1.000)">by queue id (sum)</span>
<span class="t" style="left:1176.30px;top:212.68px;font-size:24.5px;font-weight:400;color:#212121;letter-spacing:0.000px;transform:scale(0.9849,1.000)">5 min interval (mean)</span>
<span class="t" style="left:1029.95px;top:1068.88px;font-size:24.5px;font-weight:700;color:#000;letter-spacing:0.000px;transform:scale(0.9000,1.000);-webkit-text-stroke:0.5px #000">queue_id</span>
<span class="t" style="left:2638.05px;top:1068.47px;font-size:24.5px;font-weight:700;color:#000;letter-spacing:0.000px;transform:scale(0.9387,1.000);-webkit-text-stroke:0.5px #000">Value</span>
<span class="t" style="left:1029.58px;top:1151.50px;font-size:24px;font-weight:400;color:#212121;letter-spacing:0.000px;transform:scale(1.0211,1.000)">connector-bitbucket-critical</span>
<span class="t" style="left:1029.59px;top:1237.20px;font-size:24px;font-weight:400;color:#212121;letter-spacing:0.000px;transform:scale(1.0137,1.000)">connector-bitbucket-default</span>
<span class="t" style="left:2684.80px;top:1153.45px;font-size:23px;font-weight:400;color:#212121;letter-spacing:0.000px;transform:scale(1.0167,1.000)">0</span>
<span class="t" style="left:2684.78px;top:1238.05px;font-size:23px;font-weight:400;color:#212121;letter-spacing:0.000px;transform:scale(1.0182,1.000)">2</span>
</div></body></html>
